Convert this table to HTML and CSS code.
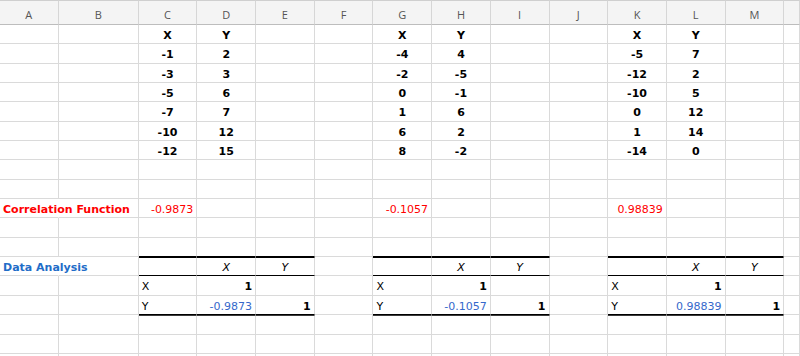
FILE: index.html
```html
<!DOCTYPE html>
<html lang="en">
<head>
    <meta charset="UTF-8">
    <meta name="viewport" content="width=device-width, initial-scale=1.0">
    <title>Correlation - Sheet1</title>
    <link rel="stylesheet" href="styles.css">
</head>
<body>

    <div class="sheet">
        <!-- column letters -->
        <div class="row head">
            <div>A</div><div>B</div><div>C</div><div>D</div><div>E</div><div>F</div><div>G</div>
            <div>H</div><div>I</div><div>J</div><div>K</div><div>L</div><div>M</div><div></div>
        </div>

        <!-- three sets of X / Y values -->
        <div class="row data">
            <div></div><div></div><div>X</div><div>Y</div><div></div><div></div><div>X</div>
            <div>Y</div><div></div><div></div><div>X</div><div>Y</div><div></div><div></div>
        </div>
        <div class="row data">
            <div></div><div></div><div>-1</div><div>2</div><div></div><div></div><div>-4</div>
            <div>4</div><div></div><div></div><div>-5</div><div>7</div><div></div><div></div>
        </div>
        <div class="row data">
            <div></div><div></div><div>-3</div><div>3</div><div></div><div></div><div>-2</div>
            <div>-5</div><div></div><div></div><div>-12</div><div>2</div><div></div><div></div>
        </div>
        <div class="row data">
            <div></div><div></div><div>-5</div><div>6</div><div></div><div></div><div>0</div>
            <div>-1</div><div></div><div></div><div>-10</div><div>5</div><div></div><div></div>
        </div>
        <div class="row data">
            <div></div><div></div><div>-7</div><div>7</div><div></div><div></div><div>1</div>
            <div>6</div><div></div><div></div><div>0</div><div>12</div><div></div><div></div>
        </div>
        <div class="row data">
            <div></div><div></div><div>-10</div><div>12</div><div></div><div></div><div>6</div>
            <div>2</div><div></div><div></div><div>1</div><div>14</div><div></div><div></div>
        </div>
        <div class="row data">
            <div></div><div></div><div>-12</div><div>15</div><div></div><div></div><div>8</div>
            <div>-2</div><div></div><div></div><div>-14</div><div>0</div><div></div><div></div>
        </div>

        <div class="row">
            <div></div><div></div><div></div><div></div><div></div><div></div><div></div>
            <div></div><div></div><div></div><div></div><div></div><div></div><div></div>
        </div>
        <div class="row">
            <div></div><div></div><div></div><div></div><div></div><div></div><div></div>
            <div></div><div></div><div></div><div></div><div></div><div></div><div></div>
        </div>

        <!-- =CORREL() results -->
        <div class="row">
            <div class="label red">Correlation Function</div><div></div>
            <div class="num red">-0.9873</div><div></div><div></div><div></div>
            <div class="num red">-0.1057</div><div></div><div></div><div></div>
            <div class="num red">0.98839</div><div></div><div></div><div></div>
        </div>

        <div class="row">
            <div></div><div></div><div></div><div></div><div></div><div></div><div></div>
            <div></div><div></div><div></div><div></div><div></div><div></div><div></div>
        </div>
        <div class="row">
            <div></div><div></div>
            <div class="t-above"></div><div class="t-above"></div><div class="t-above"></div><div></div>
            <div class="t-above"></div><div class="t-above"></div><div class="t-above"></div><div></div>
            <div class="t-above"></div><div class="t-above"></div><div class="t-above"></div><div></div>
        </div>

        <!-- Analysis ToolPak correlation output -->
        <div class="row">
            <div class="label blue">Data Analysis</div><div></div>
            <div class="t-head"></div><div class="t-head em">X</div><div class="t-head em">Y</div><div></div>
            <div class="t-head"></div><div class="t-head em">X</div><div class="t-head em">Y</div><div></div>
            <div class="t-head"></div><div class="t-head em">X</div><div class="t-head em">Y</div><div></div>
        </div>
        <div class="row">
            <div></div><div></div>
            <div>X</div><div class="num b">1</div><div></div><div></div>
            <div>X</div><div class="num b">1</div><div></div><div></div>
            <div>X</div><div class="num b">1</div><div></div><div></div>
        </div>
        <div class="row">
            <div></div><div></div>
            <div class="t-last">Y</div><div class="t-last num val">-0.9873</div><div class="t-last num b">1</div><div></div>
            <div class="t-last">Y</div><div class="t-last num val">-0.1057</div><div class="t-last num b">1</div><div></div>
            <div class="t-last">Y</div><div class="t-last num val">0.98839</div><div class="t-last num b">1</div><div></div>
        </div>
        <div class="row">
            <div></div><div></div>
            <div class="t-below"></div><div class="t-below"></div><div class="t-below"></div><div></div>
            <div class="t-below"></div><div class="t-below"></div><div class="t-below"></div><div></div>
            <div class="t-below"></div><div class="t-below"></div><div class="t-below"></div><div></div>
        </div>

        <div class="row">
            <div></div><div></div><div></div><div></div><div></div><div></div><div></div>
            <div></div><div></div><div></div><div></div><div></div><div></div><div></div>
        </div>
        <div class="row">
            <div></div><div></div><div></div><div></div><div></div><div></div><div></div>
            <div></div><div></div><div></div><div></div><div></div><div></div><div></div>
        </div>
    </div>

</body>
</html>
```

FILE: styles.css
```css
body, html {
    margin: 0;
    padding: 0;
    width: 100%;
    height: 100%;
    overflow: hidden;
    background: white;
    font-family: "DejaVu Sans", sans-serif;
    font-size: 11px;
    color: black;
}

/* Spreadsheet grid */
.sheet {
    display: grid;
    grid-template-columns: 58.7px 80px repeat(11, 58.7px) 1fr;
    grid-template-rows: 25px;
    grid-auto-rows: 19.35px;
}

.row {
    display: contents;
}

.row div {
    box-sizing: border-box;
    border-right: 1px solid #dadada;
    border-bottom: 1px solid #dadada;
    padding: 0 3px;
    line-height: 21px;
    white-space: nowrap;
    overflow: visible;
}

/* Column letters */
.head div {
    background: #f4f4f4;
    border-top: 1px solid #cfcfcf;
    border-bottom-color: #bdbdbd;
    border-right-color: #d6d6d6;
    color: #555;
    font-family: "Open Sans", sans-serif;
    font-size: 11px;
    text-align: center;
    line-height: 28px;
}

.data div {
    text-align: center;
    font-weight: bold;
}

.num { text-align: right; }
.b { font-weight: bold; }
.em { font-style: italic; text-align: center; }

.red { color: #ff0000; }
.blue { color: #1f6dc8; }
.val { color: #3568cb; }

/* Label text spills into column B */
.row .label {
    font-weight: bold;
    border-right-color: transparent;
}

/* Analysis output table rules */
.row .t-above { border-bottom-color: #000; }
.row .t-head {
    border-top: 1px solid #000;
    border-bottom-color: #000;
    line-height: 20px;
}
.row .t-last { border-bottom-color: #000; }
.row .t-below { border-top: 1px solid #3a3a3a; }
```
